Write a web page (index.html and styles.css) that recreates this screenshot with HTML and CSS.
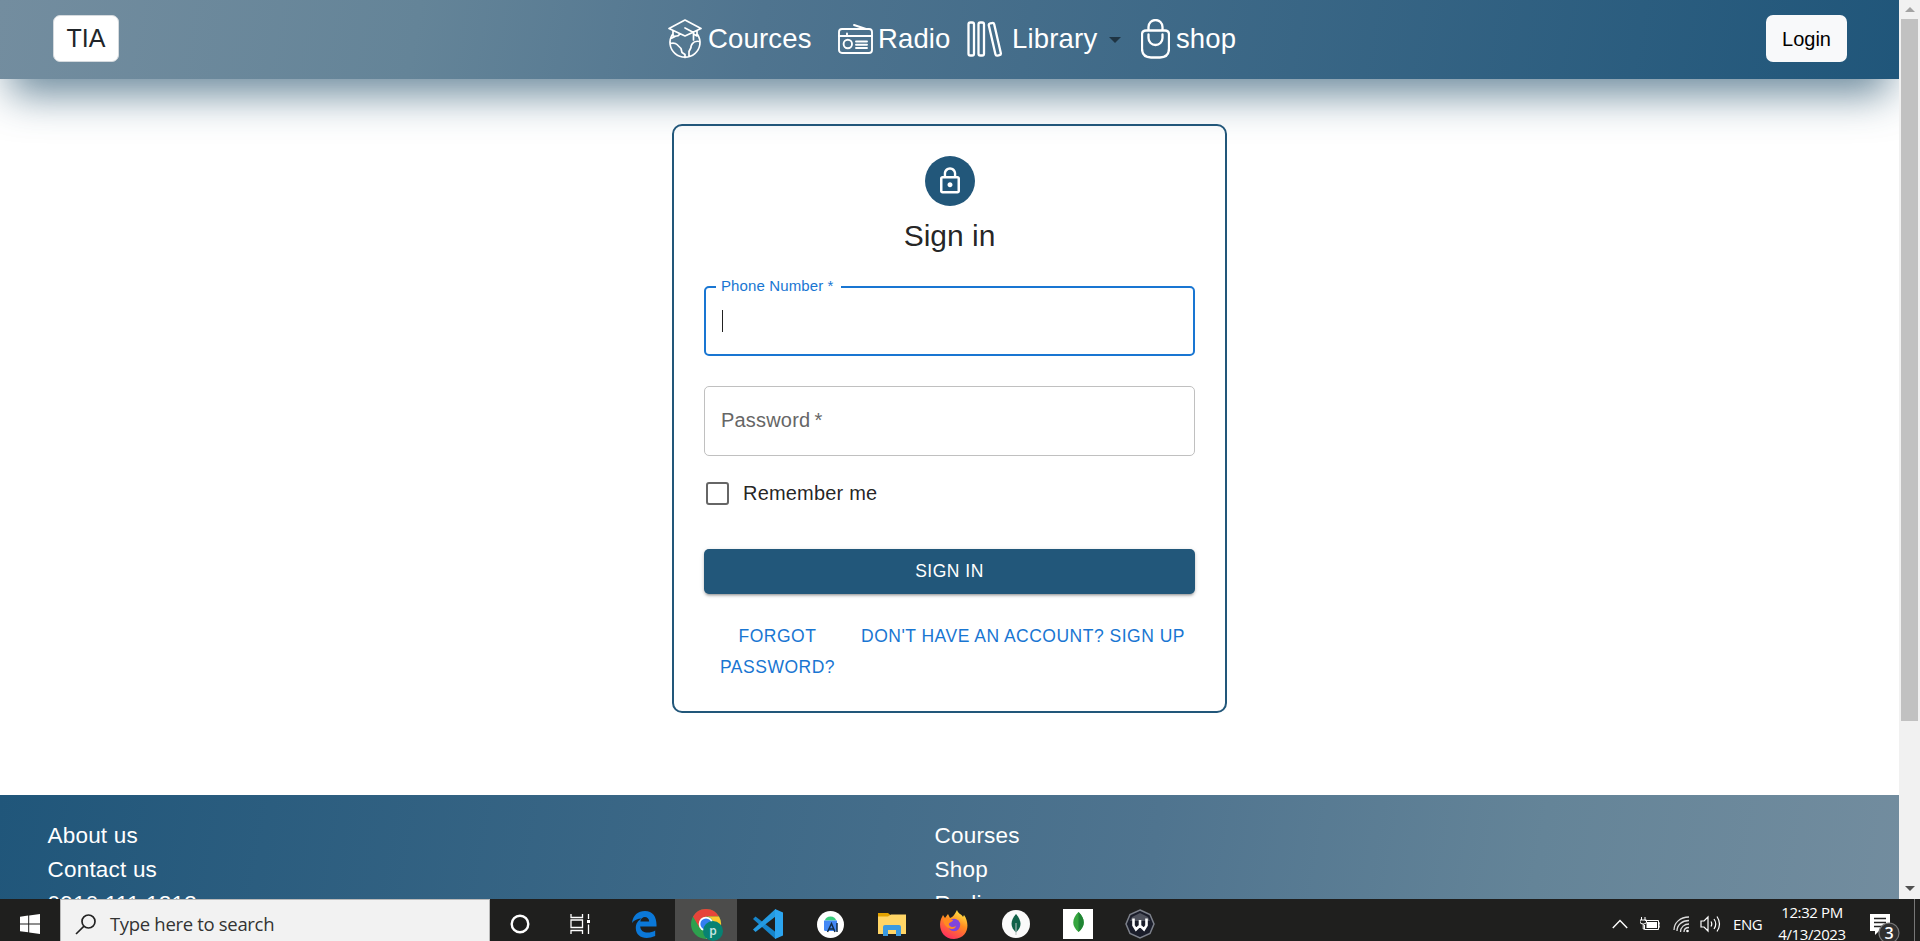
FILE: index.html
```html
<!DOCTYPE html>
<html lang="en">
<head>
<meta charset="utf-8">
<title>TIA - Sign in</title>
<link rel="stylesheet" href="styles.css">
</head>
<body>
<div class="window">
  <div class="page">
    <header class="navbar">
      <a class="brand">TIA</a>
      <nav class="nav">
        <a class="nav-item courses">
          <svg class="globe" width="34" height="40" viewBox="0 0 34 40" fill="none" stroke="#fff" stroke-width="1.700" stroke-linejoin="round" stroke-linecap="round"><path d="M17 1 33 9.500 17 17 1 9.500zM17 9l8.500 4.500v7.500M5 12v5q5 1 7-2M29 12v5l-3.500-2"/><path d="M4.500 15.500a15 14.600 0 1 0 25 0M2 24.500q5-1 7 1t4 4l1 4 3 2v3M31.500 22.500q-5-1-7 2t-1.500 4l-2 4v5M4 19l3-1.500"/></svg>
          <span>Cources</span>
        </a>
        <a class="nav-item radio">
          <svg width="35" height="30" viewBox="0 0 35 30" fill="none" stroke="#fff" stroke-width="1.900" stroke-linecap="round"><rect x="1" y="5" width="33" height="24" rx="3"/><path d="M1 12h33M9 9.500v2.500M16 1l12 4M18 17.500h11M18 20.700h11M18 24h11"/><circle cx="9.800" cy="20" r="4.200"/></svg>
          <span>Radio</span>
        </a>
        <a class="nav-item library">
          <svg width="36" height="36" viewBox="0 0 36 36" fill="none" stroke="#fff" stroke-width="2.300"><rect x="1.500" y="1.500" width="5.500" height="33" rx="1.800"/><rect x="11.500" y="1.500" width="5.500" height="33" rx="1.800"/><rect x="25" y="1.800" width="5.500" height="33" rx="1.800" transform="rotate(-13 27.800 18)"/></svg>
          <span>Library</span>
          <i class="caret"></i>
        </a>
        <a class="nav-item shop">
          <svg width="29" height="40" viewBox="0 0 29 40" fill="none" stroke="#fff" stroke-width="2.300"><path d="M5 11.500h19q4 0 4 4v14q0 9-9 9h-9q-9 0-9-9v-14q0-4 4-4zM7.500 11V8a7 7 0 0 1 14 0v3"/><path d="M7.500 15.500V19a7 7 0 0 0 14 0v-3.500" stroke-linecap="round"/></svg>
          <span>shop</span>
        </a>
      </nav>
      <a class="login">Login</a>
    </header>

    <main class="main">
      <form class="card">
        <div class="avatar"><svg width="30" height="30" viewBox="0 0 24 24" fill="#fff"><path d="M12 17c1.100 0 2-.9 2-2s-.9-2-2-2-2 .9-2 2 .9 2 2 2zm6-9h-1V6c0-2.760-2.240-5-5-5S7 3.240 7 6v2H6c-1.100 0-2 .9-2 2v10c0 1.100.9 2 2 2h12c1.100 0 2-.9 2-2V10c0-1.100-.9-2-2-2zM8.900 6c0-1.710 1.390-3.100 3.100-3.100s3.100 1.390 3.100 3.100v2H8.900V6zM18 20H6V10h12v10z"/></svg></div>
        <h1 class="title">Sign in</h1>
        <div class="field focused"><span class="float-label">Phone Number *</span><i class="cursor"></i></div>
        <div class="field"><span class="placeholder">Password&thinsp;*</span></div>
        <label class="remember"><i class="check"></i><span>Remember me</span></label>
        <div class="submit">SIGN IN</div>
        <div class="links"><a class="forgot">FORGOT PASSWORD?</a><a class="signup">DON'T HAVE AN ACCOUNT? SIGN UP</a></div>
      </form>
    </main>

    <footer class="footer">
      <div class="foot-col"><a>About us</a><a>Contact us</a><a>0910 111 1213</a></div>
      <div class="foot-col"><a>Courses</a><a>Shop</a><a>Radio</a></div>
    </footer>
  </div>
  <div class="scrollbar"><i class="arrow up"></i><i class="thumb"></i><i class="arrow down"></i></div>
</div>

<div class="taskbar">
  <div class="start"><svg width="20" height="20" viewBox="0 0 20 20" fill="#fff"><path d="M0 2.800 8.200 1.600V9.400H0zM9.200 1.400 20 0v9.400H9.200zM0 10.400h8.200v7.900L0 17.200zM9.200 10.400H20V20L9.200 18.500z"/></svg></div>
  <div class="search"><svg width="22" height="21" viewBox="0 0 22 21" fill="none" stroke="#222" stroke-width="1.700"><circle cx="13.500" cy="7.500" r="6.500"/><path d="M9 12.200 1 20"/></svg><span>Type here to search</span></div>
  <div class="apps">
    <div class="app"><svg width="20" height="20" viewBox="0 0 20 20"><circle cx="10" cy="10" r="8.300" fill="none" stroke="#fff" stroke-width="2.400"/></svg></div>
    <div class="app task-view"><svg width="20" height="20" viewBox="0 0 20 20" fill="none" stroke="#fff" stroke-width="1.300"><path d="M1 0v3.500h11.500V0M1 20v-3.500h11.500V20M1 6h11.500v7.500H1zM18.500 0v5M18.500 10.500V20"/><path d="M17 6h3v3h-3z" fill="#fff" stroke="none"/></svg></div>
    <div class="app"><svg width="25" height="27" viewBox="0 0 25 27"><path fill="#0b78d8" d="M0 12C1 4 6 0 13 0c8 0 12 6 11.500 15.500H8.200c.5 7 9 7.500 15 4V25C13 29.500 3.800 26 3.800 17c0-5 2.500-7.500 5.700-9.500C6 7.500 2 9 0 12zm8.300-1.500h8.900C17 4.500 9 4.500 8.300 10.500z"/></svg></div>
    <div class="app active"><svg width="34" height="34" viewBox="0 0 34 34"><circle cx="15" cy="15" r="15" fill="#2da04e"/><path fill="#e6443a" d="M2 7.500A15 15 0 0 1 28 7.500H15L8.500 18.700z"/><path fill="#fcc72e" d="M28 7.500A15 15 0 0 1 15 30l6.500-11.200A7.500 7.500 0 0 0 15 7.500z"/><circle cx="15" cy="15" r="7.300" fill="#fff"/><circle cx="15" cy="15" r="5.600" fill="#337ef0"/><circle cx="22" cy="22" r="10" fill="#078273"/><text class="profile" x="22" y="26" text-anchor="middle">p</text></svg></div>
    <div class="app"><svg width="30" height="30" viewBox="0 0 30 30"><path fill="#1685cb" d="M0 10 2.500 7.500 22.500 23v7L0 10z"/><path fill="#249be2" d="M0 20.500 22.500 0v7.500L2.500 23z"/><path fill="#2ca5f0" d="M22 0 30 3.500v23L22 30z"/></svg></div>
    <div class="app"><svg width="27" height="27" viewBox="0 0 27 27"><circle cx="13.500" cy="13.500" r="13.500" fill="#fff"/><path fill="#38ce7d" d="M8 9.500a5.500 4 0 0 1 11 0z"/><path fill="#4287f5" d="M7 9.500h13v9q0 1.500-1.500 1.500h-10Q7 20 7 18.500z"/><path d="m10.500 21 4-8.500 3.500 8.500M12 18h4.500M20 12v9" fill="none" stroke="#122c44" stroke-width="1.500"/></svg></div>
    <div class="app"><svg width="28" height="24" viewBox="0 0 28 24"><path fill="#e2a200" d="M0 1h10l3 2.500V8H0z"/><path fill="#ffd566" d="M0 4.500h10l3-2h15V22H0z"/><path fill="#3b9ae1" d="M5 24V15q0-2 2-2h14q2 0 2 2v9h-5v-6h-8v6z"/></svg></div>
    <div class="app"><svg width="28" height="29" viewBox="0 0 28 29"><defs><linearGradient id="fox" x1=".8" y1="0" x2=".3" y2="1"><stop offset="0" stop-color="#fff14c"/><stop offset=".45" stop-color="#ff8a20"/><stop offset="1" stop-color="#ff2b62"/></linearGradient></defs><path fill="url(#fox)" d="M17 0c1 4 5 4 6 7l1-2c6 8 5 23-10 24C2 29-2 17 1 9l2-4 2 3 3-4 2 4c3-1 5-4 7-8z"/><circle cx="14" cy="15" r="6.200" fill="#8045dc"/><path fill="#ff8b20" d="M3 9c4-2 6 0 10 1 0 2-5 2-4 5 2 3 5 2 7 1-1 5-12 4-13-7z"/></svg></div>
    <div class="app"><svg width="28" height="28" viewBox="0 0 28 28"><circle cx="14" cy="14" r="14" fill="#fafafa"/><path fill="#116149" d="M14 4c6 7 6 13 0 18.500C8 17 8 11 14 4z"/><path stroke="#b8c4c2" d="M14 13v12"/></svg></div>
    <div class="app"><svg width="30" height="30" viewBox="0 0 30 30"><path fill="#fff" d="M0 0h30v30H0z"/><path fill="#36a53f" d="M15.500 3c7 7 7 14 0 20-7-6-7-13 0-20z"/><path fill="#208434" d="M15.500 3c7 7 7 14 0 20z"/></svg></div>
    <div class="app"><svg width="30" height="30" viewBox="0 0 30 30"><path fill="#1b1e2b" stroke="#7d818b" stroke-width="1.500" d="M15 1 25 5.500 29 15 25 24.500 15 29 5 24.500 1 15 5 5.500z"/><path fill="#4f525d" d="M15 4 23 8l2 4H5l2-4z"/><path d="M8.500 9.500v7l2.500 4 4-4 4 4 2.500-4v-7M15 11v6" fill="none" stroke="#fff" stroke-width="2.600"/></svg></div>
  </div>
  <div class="tray">
    <svg class="chev" width="16" height="10" viewBox="0 0 16 10" fill="none" stroke="#fff" stroke-width="1.400"><path d="m.8 9 7.200-7.500L15.200 9"/></svg>
    <svg class="battery" width="20" height="14" viewBox="0 0 20 14"><path fill="none" stroke="#fff" d="M5 3.500h13.500v9H4.500V8M18.500 6H20v4h-1.500M1.500 0v3M5 0v3M0 3h6.500v2q0 2-3.200 2Q0 7 0 5zM3.200 7v5h1"/><path fill="#fff" d="M6.500 5H17v6H6.500z"/></svg>
    <svg class="wifi" width="17" height="17" viewBox="0 0 17 17" fill="none" stroke="#ddd" stroke-width="1.300"><path d="M1 14C1 7 7 1 16 1M4 15c0-6 5-10.500 12-10.500M7.500 16c0-5 4-8 8.500-8M11 16c0-3 2-4.500 5-4.500"/><circle cx="14.500" cy="15" r="1.300" fill="#fff" stroke="none"/></svg>
    <svg class="sound" width="21" height="18" viewBox="0 0 21 18" fill="none" stroke="#fff" stroke-width="1.200"><path d="M1 6h3l4-4v14l-4-4H1zM11 6.500q1.500 2.500 0 5M14 4q3.500 5 0 10M17 1.500q5 7.500 0 15"/></svg>
    <span class="lang">ENG</span>
    <div class="clock"><span>12:32 PM</span><span>4/13/2023</span></div>
    <div class="notice"><svg width="32" height="34" viewBox="0 0 32 34"><path fill="#fff" d="M0 0h20v17H9l-4 4v-4H0z"/><path stroke="#222" stroke-width="1.300" d="M4 4.500h12M4 8.500h12M4 12.500h8"/><circle cx="19" cy="19" r="10" fill="#303030" stroke="#777" stroke-width="1.200"/><text class="badge" x="19" y="25" text-anchor="middle">3</text></svg></div>
    <i class="peek"></i>
  </div>
</div>
</body>
</html>
```

FILE: styles.css
```css
* { box-sizing: border-box; }
body {
  margin: 0;
  width: 1920px;
  height: 941px;
  overflow: hidden;
  font-family: "Liberation Sans", Arial, sans-serif;
  background: #fff;
}
svg { display: block; flex: none; }
.window { display: flex; height: 899px; }
.page { width: 1899px; height: 899px; overflow: hidden; display: flex; flex-direction: column; }

.navbar {
  flex: none;
  height: 79px;
  padding: 15px 52px 17px 53px;
  display: flex;
  align-items: flex-start;
  background: linear-gradient(100deg, #738d9f, #648498 22%, #4f748f 40%, #20567a);
  box-shadow: 0 25px 42px -10px rgba(32, 78, 106, .68);
}
.brand, .login {
  flex: none;
  height: 47px;
  border-radius: 7px;
  line-height: 47px;
  text-align: center;
}
.brand { width: 66px; font-size: 25px; line-height: 45px; color: #212529; background: #fff; border: 1px solid #d5dade; }
.login { width: 81px; margin-left: auto; font-size: 20px; line-height: 48px; color: #000; background: #f8f9fa; }
.nav { display: flex; margin-left: 549px; color: #fff; font-size: 27.5px; height: 47px; white-space: nowrap; }
.nav-item { display: flex; align-items: center; }
.nav-item span { line-height: 46px; }
.courses { width: 170px; gap: 6px; letter-spacing: .18px; }
.radio { width: 129px; gap: 5px; letter-spacing: .12px; }
.library { width: 174px; gap: 9px; letter-spacing: .18px; }
.shop { gap: 6px; letter-spacing: .12px; }
.caret { margin: 3px 0 0 3px; border: 6px solid transparent; border-top: 6px solid #1f3443; border-bottom: 0; }

.main { flex: none; height: 716px; padding-top: 45px; display: flex; justify-content: center; align-items: flex-start; }
.card {
  width: 555px;
  height: 589px;
  border: 2px solid #22577a;
  border-radius: 10px;
  padding: 30px 30px 0;
  display: flex;
  flex-direction: column;
  color: rgba(0, 0, 0, .87);
}
.card > * { flex: none; }
.avatar { align-self: center; width: 50px; height: 50px; border-radius: 50%; background: #22577a; display: flex; align-items: center; justify-content: center; }
.title { margin: 10px 0 30px; font-size: 30px; line-height: 40px; font-weight: 400; text-align: center; }
.field { position: relative; height: 70px; margin-bottom: 30px; padding: 0 16px; border: 1px solid #c0c0c0; border-radius: 5px; display: flex; align-items: center; }
.focused { border: 2px solid #1976d2; padding: 0 16px; }
.float-label { position: absolute; left: 10px; top: -11px; width: 125px; padding-left: 5px; font-size: 15px; line-height: 18px; letter-spacing: .12px; color: #1976d2; background: #fff; white-space: nowrap; }
.cursor { width: 1px; height: 22px; background: #222; }
.placeholder { font-size: 20px; letter-spacing: .19px; color: #666; line-height: 28px; margin-top: -2px; }
.remember { margin-top: -5px; height: 25px; display: flex; align-items: center; font-size: 20px; letter-spacing: .19px; }
.check { width: 23px; height: 23px; margin: 0 14px 0 2px; border: 2.500px solid #666; border-radius: 3px; }
.submit { margin-top: 43px; height: 45px; border-radius: 5px; background: #22577a; color: #fff; font-size: 17.500px; letter-spacing: .5px; line-height: 44px; text-align: center; box-shadow: 0 3px 2px -2px rgba(0,0,0,.2), 0 2px 3px rgba(0,0,0,.16), 0 1px 5px rgba(0,0,0,.12); }
.links { display: flex; margin-top: 27px; color: #1976d2; font-size: 17.500px; letter-spacing: .5px; line-height: 31px; }
.forgot { width: 147px; padding: 0 10px; text-align: center; }
.signup { margin-left: 10px; white-space: nowrap; }

.footer { flex: none; height: 220px; padding: 24px 47.500px; display: flex; background: linear-gradient(100deg, #20567a, #4f748f 60%, #648498 80%, #738d9f); color: #fff; font-size: 22.500px; letter-spacing: .2px; line-height: 34px; }
.foot-col { width: 887px; display: flex; flex-direction: column; }

.scrollbar { width: 21px; height: 899px; background: #f1f1f1; display: flex; flex-direction: column; align-items: center; }
.arrow { border: 5px solid transparent; }
.up { margin-top: 7px; border-top: 0; border-bottom-color: #a3a3a3; }
.thumb { width: 17px; height: 702px; margin-top: 7px; background: #c1c1c1; }
.down { margin-top: auto; margin-bottom: 8px; border-bottom: 0; border-top-color: #505050; }

.taskbar { height: 42px; overflow: hidden; display: flex; background: #1f1f1e; color: #fff; font-family: "Open Sans", "Noto Sans", sans-serif; }
.start { width: 60px; height: 50px; display: flex; align-items: center; justify-content: center; }
.search { width: 430px; height: 50px; padding-left: 14px; display: flex; align-items: center; gap: 13px; border: 1px solid #b9b9b9; background: #f2f2f2; color: #333; font-size: 18.500px; letter-spacing: -.32px; white-space: nowrap; }
.search span { line-height: 48px; }
.apps { display: flex; height: 50px; margin-left: -1px; }
.app { width: 62px; height: 50px; display: flex; align-items: center; justify-content: center; }
.task-view { padding-right: 4px; }
.active { background: #4c4c4b; padding-left: 3px; padding-top: 3px; }
.profile { font-size: 12px; font-weight: 600; fill: #cce7e3; }
.tray { margin-left: auto; height: 50px; display: flex; align-items: center; font-size: 15px; white-space: nowrap; }
.battery { margin-left: 12px; }
.wifi { margin-left: 13px; }
.sound { margin-left: 10px; }
.lang { width: 32px; margin-left: 12px; letter-spacing: -.4px; }
.clock { width: 76px; margin: -3px 0 0 9px; display: flex; flex-direction: column; align-items: center; line-height: 22px; letter-spacing: -.4px; }
.notice { margin: 13px 0 0 20px; }
.badge { font-size: 16px; font-weight: 600; fill: #fff; }
.peek { width: 1px; height: 50px; margin: 0 5px 0 12px; background: #777; }
```
